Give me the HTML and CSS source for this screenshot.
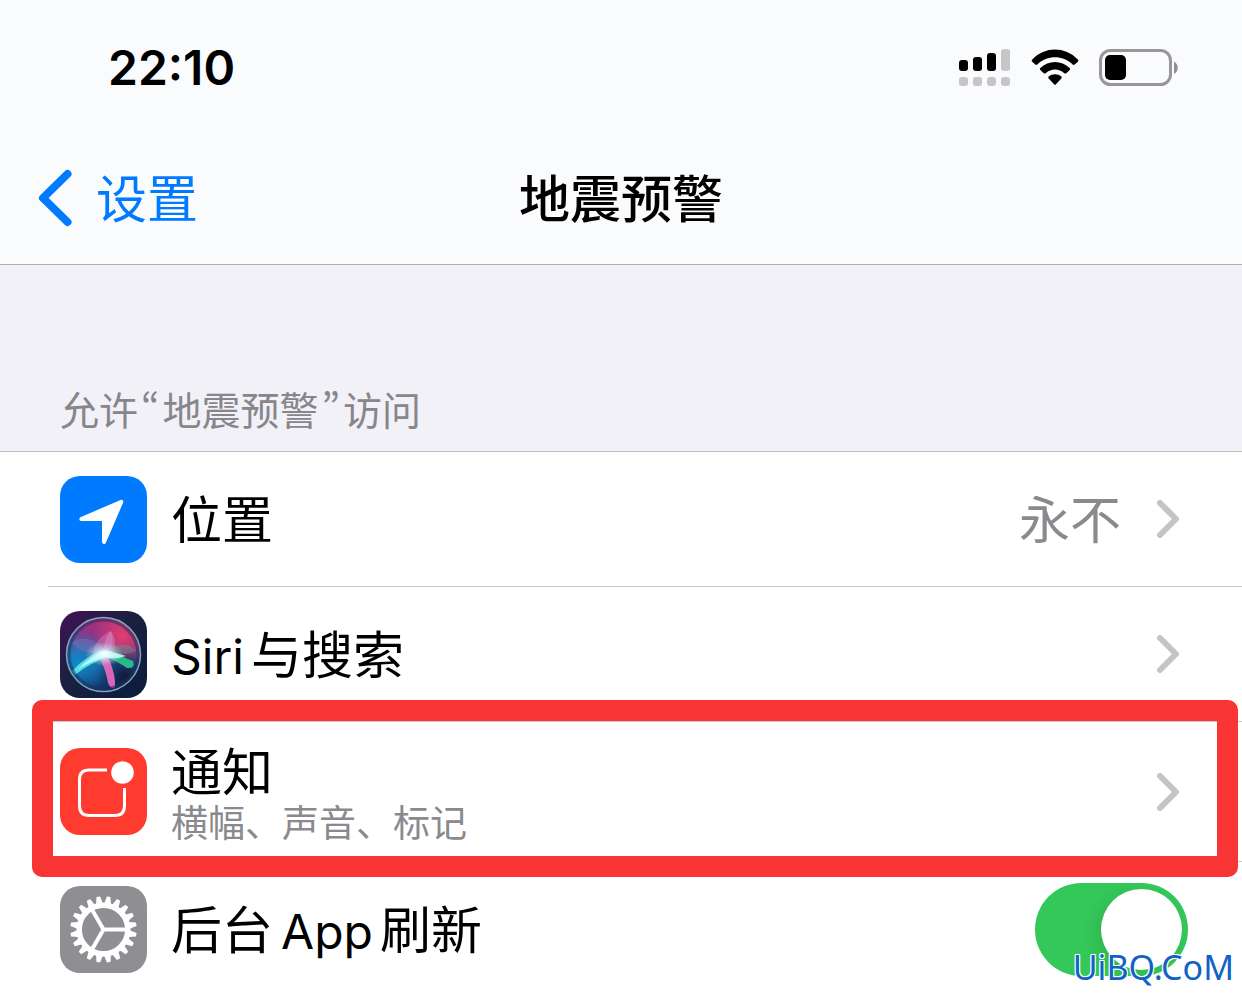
FILE: index.html
```html
<!DOCTYPE html>
<html lang="zh-CN">
<head>
  <meta charset="UTF-8">
  <meta name="viewport" content="width=device-width, initial-scale=1">
  <title>地震预警</title>
  <link rel="stylesheet" href="styles.css">
</head>
<body>
  <header class="header">
    <!-- 状态栏 -->
    <div class="status-bar">
      <span class="time">22:10</span>
      <div class="status-icons">
        <svg width="52" height="38" viewBox="0 0 52 38">
          <g fill="#000">
            <rect x="0" y="11" width="9" height="11" rx="3"/>
            <rect x="14" y="8" width="9" height="14" rx="3"/>
            <rect x="28" y="4" width="9" height="18" rx="3"/>
          </g>
          <g fill="#c6c6c8">
            <rect x="42" y="0" width="9" height="22" rx="3"/>
            <rect x="0" y="28" width="9" height="9" rx="3"/>
            <rect x="14" y="28" width="9" height="9" rx="3"/>
            <rect x="28" y="28" width="9" height="9" rx="3"/>
            <rect x="42" y="28" width="9" height="9" rx="3"/>
          </g>
        </svg>
        <svg width="48" height="38" viewBox="0 0 48 38">
          <path d="M1.2 10.5C14-2.8 34-2.8 46.800 10.500Q47.800 11.700 46.800 12.700L43.700 15.500Q42.700 16.300 41.700 15.400C31.500 5.800 16.500 5.800 6.300 15.400Q5.300 16.300 4.300 15.500L1.200 12.700Q.2 11.700 1.200 10.500Z"/>
          <path d="M9.300 19C17.500 11 30.500 11 38.700 19Q39.600 20 38.700 21L35.300 24.200Q34.300 25 33.300 24.200C27.800 19.400 20.200 19.400 14.700 24.200Q13.700 25 12.700 24.200L9.300 21Q8.400 20 9.300 19Z"/>
          <path d="M17.700 27.500C21.300 24.500 26.700 24.500 30.300 27.500Q31.200 28.500 30.300 29.500L25 35.200Q24 36.200 23 35.200L17.700 29.500Q16.800 28.500 17.700 27.500Z"/>
        </svg>
        <svg width="80" height="38" viewBox="0 0 80 38">
          <rect x="1.500" y="1.500" width="70" height="34" rx="10" fill="none" stroke="#97979a" stroke-width="3"/>
          <rect x="6" y="6" width="21" height="25" rx="5"/>
          <path d="M75 12.500C80 15 80 22.500 75 25Z" fill="#8e8e92"/>
        </svg>
      </div>
    </div>

    <!-- 导航栏 -->
    <nav class="nav-bar">
      <a class="back" href="#">
        <svg width="34" height="58" viewBox="0 0 34 58">
          <path d="M29.500 5L5 29L29.500 53" fill="none" stroke="#007aff" stroke-width="8" stroke-linecap="round" stroke-linejoin="round"/>
        </svg>
        <span>设置</span>
      </a>
      <h1>地震预警</h1>
    </nav>
  </header>

  <main>
    <h2 class="section-title">允许<span class="quote">“</span>地震预警<span class="quote">”</span>访问</h2>

    <div class="list">
      <a class="row" href="#">
        <svg class="icon" viewBox="0 0 87 87">
          <rect width="87" height="87" rx="20" fill="#007aff"/>
          <path d="M21.300 43L61.300 25.800L44 66V43Z" fill="#fff" stroke="#fff" stroke-width="4" stroke-linejoin="round"/>
        </svg>
        <span class="label">位置</span>
        <span class="value">永不</span>
        <svg class="chevron" viewBox="0 0 22 38"><path d="M3 3L19 19L3 35"/></svg>
      </a>

      <a class="row" href="#">
        <svg class="icon" viewBox="0 0 87 87">
          <defs>
            <linearGradient id="siriBg" x1="0" y1="0" x2="1" y2="1">
              <stop offset="0" stop-color="#441057"/>
              <stop offset=".45" stop-color="#19213f"/>
              <stop offset="1" stop-color="#0b1c3d"/>
            </linearGradient>
            <linearGradient id="siriBall" x1=".55" y1="0" x2=".45" y2="1">
              <stop offset="0" stop-color="#b02c80"/>
              <stop offset=".4" stop-color="#773b85"/>
              <stop offset=".65" stop-color="#17659b"/>
              <stop offset="1" stop-color="#142c68"/>
            </linearGradient>
            <radialGradient id="siriRed" cx=".75" cy=".25" r=".4">
              <stop offset="0" stop-color="#e33c70"/>
              <stop offset="1" stop-color="#e33c70" stop-opacity="0"/>
            </radialGradient>
            <radialGradient id="siriBlue" cx=".15" cy=".6" r=".45">
              <stop offset="0" stop-color="#1288c9"/>
              <stop offset="1" stop-color="#1288c9" stop-opacity="0"/>
            </radialGradient>
            <radialGradient id="siriDark" cx=".8" cy=".8" r=".4">
              <stop offset="0" stop-color="#10183d"/>
              <stop offset="1" stop-color="#10183d" stop-opacity="0"/>
            </radialGradient>
            <radialGradient id="siriGlow">
              <stop offset="0" stop-color="#fff"/>
              <stop offset="1" stop-color="#b5f5ff" stop-opacity="0"/>
            </radialGradient>
          </defs>
          <rect width="87" height="87" rx="20" fill="url(#siriBg)"/>
          <circle cx="43.500" cy="43.500" r="37" fill="url(#siriBall)"/>
          <circle cx="43.500" cy="43.500" r="37" fill="url(#siriRed)"/>
          <circle cx="43.500" cy="43.500" r="37" fill="url(#siriBlue)"/>
          <circle cx="43.500" cy="43.500" r="37" fill="url(#siriDark)"/>
          <path d="M12 31C25 23 42 30 49 44C34 43 18 42 12 31Z" fill="#8a7cc8" opacity=".35"/>
          <path d="M51 20C38 26 30 38 34 50L49 43C53 36 53 27 51 20Z" fill="#e58acb" opacity=".4"/>
          <path d="M51 20C58 31 56 46 44 50C42 37 45 27 51 20Z" fill="#d99ad6" opacity=".4"/>
          <path d="M44 42C53 32 69 31 76 40C65 45 55 44 44 42Z" fill="#5f9a95" opacity=".45"/>
          <path d="M43 38L73 50Q76 58 67 57Q57 50 42 44Z" fill="#27b98a"/>
          <path d="M37 42Q46 38 49 48Q56 65 55 76Q51 79 48 72Q46 58 37 42Z" fill="#d766b8"/>
          <path d="M12 60Q26 45 44 38L51 46Q32 50 15 64Z" fill="#58dde6"/>
          <path d="M18 58Q32 44 46 39L66 45Q54 49 45 46Q32 50 18 58Z" fill="#c9ffff" opacity=".85"/>
          <ellipse cx="44" cy="43" rx="19" ry="12" fill="url(#siriGlow)"/>
          <circle cx="43.500" cy="43.500" r="37" fill="none" stroke="#7ea5bd" stroke-width="1.500"/>
          <circle cx="43.500" cy="43.500" r="34.500" fill="none" stroke="#1c3159" stroke-width="3" opacity=".55"/>
        </svg>
        <span class="label"><span class="latin">Siri</span>与搜索</span>
        <svg class="chevron" viewBox="0 0 22 38"><path d="M3 3L19 19L3 35"/></svg>
      </a>

      <a class="row row-tall" href="#">
        <svg class="icon" viewBox="0 0 87 87">
          <rect width="87" height="87" rx="20" fill="#ff3b30"/>
          <path d="M47 22H29Q19.500 22 19.500 31.500V57.500Q19.500 67.500 29 67.500H55Q64.500 67.500 64.500 57.500V40" fill="none" stroke="#fff" stroke-width="3"/>
          <circle cx="62.500" cy="24.500" r="11.300" fill="#fff"/>
        </svg>
        <span class="label">
          通知
          <small>横幅、声音、标记</small>
        </span>
        <svg class="chevron" viewBox="0 0 22 38"><path d="M3 3L19 19L3 35"/></svg>
        <span class="highlight"></span>
      </a>

      <div class="row row-switch">
        <svg class="icon" viewBox="0 0 87 87">
          <defs>
            <path id="tooth" d="M-3.400-26L-1.800-33.200H1.800L3.400-26Z"/>
            <g id="teeth">
              <use href="#tooth" transform="rotate(9)"/>
              <use href="#tooth" transform="rotate(27)"/>
              <use href="#tooth" transform="rotate(45)"/>
              <use href="#tooth" transform="rotate(63)"/>
            </g>
          </defs>
          <rect width="87" height="87" rx="20" fill="#8e8e93"/>
          <g transform="translate(43.500 43.500)" fill="#fff">
            <use href="#teeth"/>
            <use href="#teeth" transform="rotate(72)"/>
            <use href="#teeth" transform="rotate(144)"/>
            <use href="#teeth" transform="rotate(216)"/>
            <use href="#teeth" transform="rotate(288)"/>
            <circle r="24.300" fill="none" stroke="#fff" stroke-width="5.500"/>
            <path d="M0 0H24M0 0L-12-20.800M0 0L-12 20.800" stroke="#fff" stroke-width="4"/>
          </g>
        </svg>
        <label class="label" for="refresh">后台<span class="latin latin-mid">App</span>刷新</label>
        <input class="switch" type="checkbox" id="refresh" checked>
      </div>
    </div>
  </main>

  <div class="watermark">UiBQ.CoM</div>
</body>
</html>
```

FILE: styles.css
```css
/* ----- 基础 ----- */
* {
  box-sizing: border-box;
}

body {
  position: relative;
  margin: 0;
  font-family: Inter, "Noto Sans CJK SC", sans-serif;
  font-size: 51px;
  line-height: 60px;
  color: #000;
  background: #fff;
}

a {
  color: inherit;
  text-decoration: none;
}

svg {
  display: block;
  flex: none;
}

/* ----- 顶部 ----- */
.header {
  background: #fafbfd;
  border-bottom: 1px solid #adadb2;
}

.status-bar {
  display: flex;
  justify-content: space-between;
  align-items: center;
  height: 136px;
  padding: 0 63px 0 108px;
}

.time {
  font-size: 48px;
  font-weight: 600;
}

.status-icons {
  display: flex;
  gap: 20px;
}

.nav-bar {
  display: grid;
  grid-template-columns: 1fr auto 1fr;
  align-items: center;
  height: 128px;
  padding: 0 38px 4px;
}

.back {
  display: flex;
  align-items: center;
  gap: 24px;
  color: #007aff;
}

.back span,
h1 {
  padding-top: 4px;
}

h1 {
  margin: 0;
  font-size: 51px;
  font-weight: 500;
}

/* ----- 列表 ----- */
main {
  background: #f2f1f7;
}

.section-title {
  margin: 0;
  padding: 118px 60px 18px;
  font-family: "Noto Sans CJK SC", sans-serif;
  font-size: 39px;
  font-weight: 400;
  line-height: 50px;
  color: #86868b;
}

.quote {
  margin: 0 3px;
  font-feature-settings: "pwid";
}

.list {
  padding-left: 48px;
  background: #fff;
  border-top: 1px solid #c1c1c5;
}

.row {
  position: relative;
  display: flex;
  align-items: center;
  min-height: 135px;
  padding: 0 63px 0 12px;
  border-bottom: 1px solid #c8c8cb;
}

.row-tall {
  min-height: 140px;
}

.row-switch {
  min-height: 0;
  padding: 21px 54px 17px 12px;
  border-bottom: none;
}

.icon {
  width: 87px;
  height: 87px;
  margin-right: 24px;
}

.label {
  flex: 1;
  padding-top: 4px;
}

.label small {
  display: block;
  font-size: 37px;
  line-height: 42px;
  color: #8a8a8e;
}

.latin {
  margin-right: 7px;
  font-size: 48px;
}

.latin-mid {
  margin-left: 8px;
}

.value {
  margin-right: 36px;
  padding-top: 4px;
  color: #8a8a8e;
}

.chevron {
  width: 22px;
  height: 38px;
  fill: none;
  stroke: #c4c4c6;
  stroke-width: 6;
  stroke-linecap: round;
  stroke-linejoin: round;
}

/* ----- 开关 ----- */
.switch {
  appearance: none;
  width: 153px;
  height: 93px;
  margin: 0;
  padding: 6px;
  border-radius: 47px;
  background: #34c759;
}

.switch::before {
  content: "";
  display: block;
  width: 81px;
  height: 81px;
  margin-left: auto;
  border-radius: 50%;
  background: #fff;
  box-shadow: -6px 4px 16px rgba(0, 0, 0, 0.08);
}

/* ----- 红框与水印 ----- */
.highlight {
  position: absolute;
  top: -22px;
  right: 4px;
  bottom: -16px;
  left: -16px;
  z-index: 1;
  border: 21px solid #f93434;
  border-radius: 10px;
  pointer-events: none;
}

.watermark {
  position: absolute;
  right: 8px;
  bottom: 6px;
  font-family: "Noto Sans", sans-serif;
  font-size: 34px;
  line-height: 40px;
  color: #1062c4;
  text-shadow: 1px 1px #fff, -1px -1px #fff, 1px -1px #fff, -1px 1px #fff;
}
```
